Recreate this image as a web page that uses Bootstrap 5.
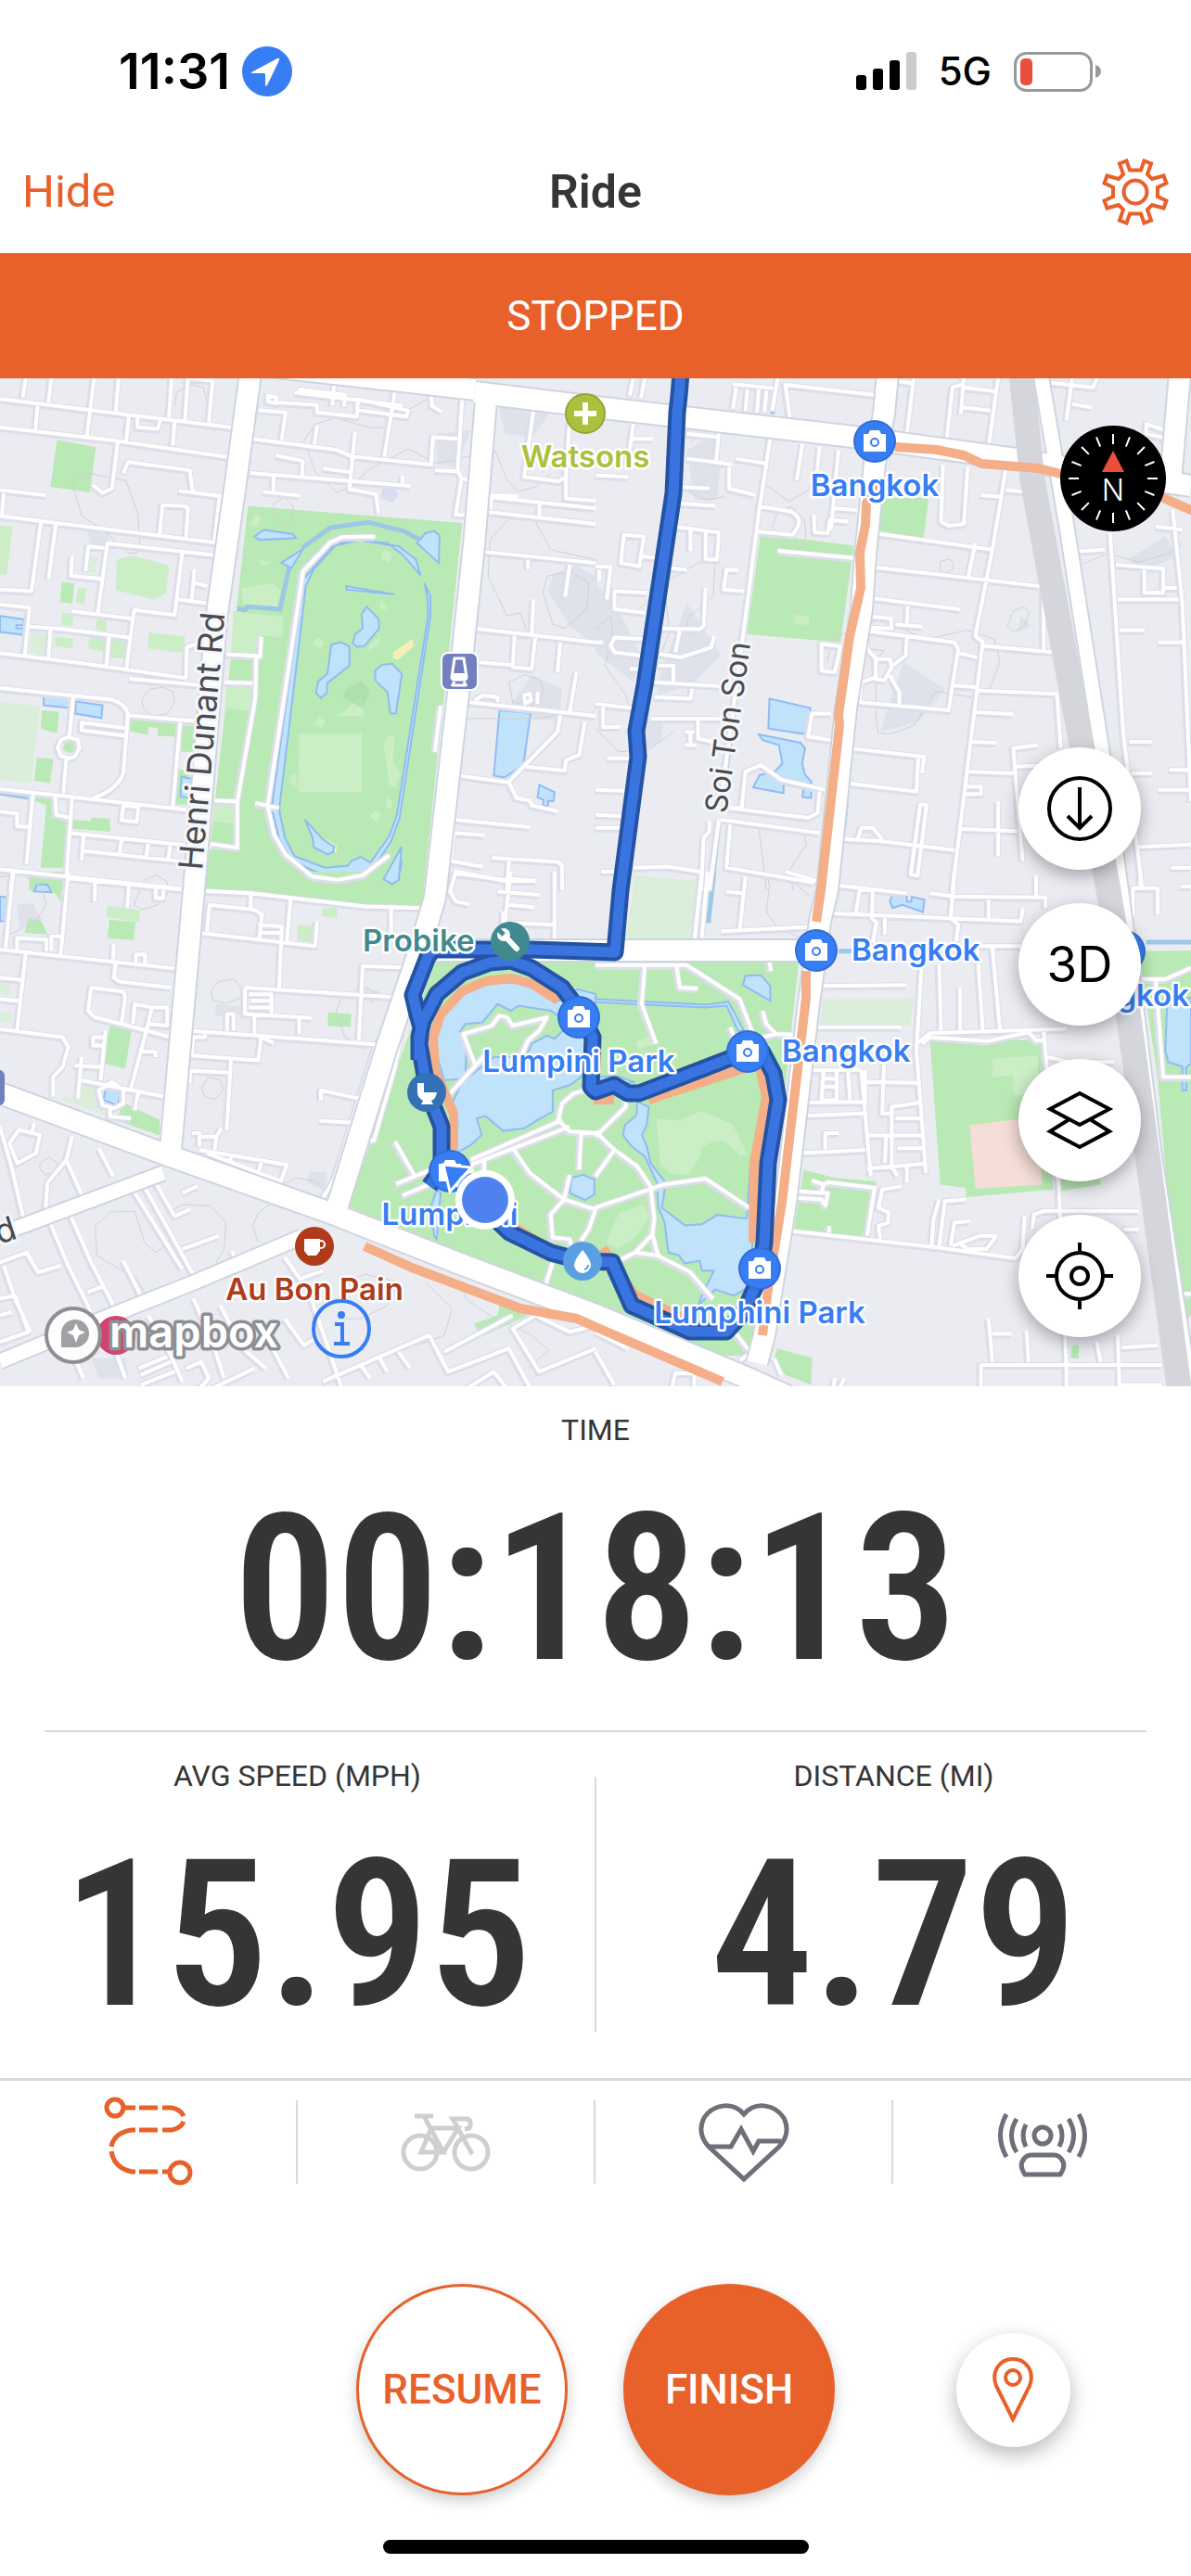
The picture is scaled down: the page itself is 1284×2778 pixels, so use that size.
<!DOCTYPE html>
<html lang="en">
<head>
<meta charset="utf-8">
<meta name="viewport" content="width=device-width, initial-scale=1">
<title>Ride</title>
<link rel="stylesheet" href="https://cdn.jsdelivr.net/npm/bootstrap@5.3.0/dist/css/bootstrap.min.css">
<style>
:root{--brand:#e8602a;--ink:#353535;--rule:#d9d9d9}
body{font-family:Roboto,"Liberation Sans",sans-serif;color:var(--ink);background:#fff;line-height:1}
svg{display:block}
.status-bar{height:140px;padding:14px 96px 0 128px;color:#000;font-family:Inter,"Liberation Sans",sans-serif}
.clock-group{gap:12px}
.clock{font-size:54px;font-weight:600}
.carrier{font-size:42px;font-weight:500}
.title-bar{height:133px;padding:0 24px}
.title-bar>*{flex:1 1 0}
.hide-btn{font-size:49px;font-weight:400;color:var(--brand)}
.screen-title{font-size:50px;font-weight:600}
.state-banner{height:135px;background:var(--brand);color:#fff;font-size:44px;font-weight:400}
.map-area{height:1087px;background:#ebecf2}
.map-canvas{width:100%;height:100%}
.map-canvas path{vector-effect:non-scaling-stroke}
.map-tools{top:398px;right:54px;gap:36px}
.tool-btn{width:132px;height:132px;background:#fff;color:#000;font:400 53px Inter,"Liberation Sans",sans-serif;box-shadow:0 6px 18px rgba(0,0,0,.32)}
.compass{top:51px;right:27px;width:114px;height:114px}
.park{fill:#b9e9b4}.lawn{fill:#cbeec6}.pale{fill:#daeeda}
.water{fill:#c1e2fb;stroke:#8fbcf3;stroke-width:2}
.canal{fill:none;stroke:#9cc8e6;stroke-width:5}
.hill{fill:#dcdfe8;opacity:.8}
.contour{fill:none;stroke:#cfd2d3;stroke-width:1}
.road-edge,.road-fill{fill:none;stroke-linejoin:round}
.road-edge{stroke:#dddee9;stroke-width:8}
.road-fill{stroke:#fff;stroke-width:4}
.main-edge{stroke:#cfd5e0;stroke-width:26;fill:none}
.main-fill{stroke:#fff;stroke-width:22;fill:none}
.sub-edge{stroke:#cfd5e0;stroke-width:19;fill:none}
.sub-fill{stroke:#fff;stroke-width:15;fill:none}
.rail{stroke:#d5d6dc;stroke-width:27;fill:none}
.heat{stroke:#f4ae88;stroke-width:10;fill:none;stroke-linejoin:round}
.track-edge{stroke:#2453a3;stroke-width:19;fill:none;stroke-linejoin:round}
.track-fill{stroke:#3974e0;stroke-width:11;fill:none;stroke-linejoin:round}
.poi{font:600 33px Inter,"Liberation Sans",sans-serif;fill:#377df4;stroke:#fff;stroke-width:5;stroke-linejoin:round;paint-order:stroke}
.street{font:400 36px Inter,"Liberation Sans",sans-serif;fill:#4a4a50;stroke:#f5f6f9;stroke-width:6;stroke-linejoin:round;paint-order:stroke}
.lane{font-size:33px}
.brandmark{font:600 47px Inter,"Liberation Sans",sans-serif;fill:#fff;stroke:#8e8f94;stroke-width:7;stroke-linejoin:round;paint-order:stroke}
.metric{height:372px;padding-top:31px}
.metric-name{font-size:32px;line-height:32px;font-weight:400}
.metric-value{font-family:"Roboto Condensed",Roboto,sans-serif;font-weight:600;font-size:220px;line-height:228px;margin-top:42px}
.time-metric{height:373px;margin:0 48px;border-bottom:2px solid var(--rule)}
.metric-rule{width:2px;height:275px;margin-top:48px;background:var(--rule)}
.pair{height:373px}
.tab-strip{border-top:3px solid var(--rule);height:134px;padding-top:21px}
.tab-btn{height:90px;border-right:2px solid var(--rule)!important}
.tab-btn:last-child{border-right:0!important}
.tab-btn svg{overflow:visible}
.ride-actions{display:grid;grid-template-columns:1fr auto 1fr;padding-top:88px}
.ride-actions>:nth-child(2){gap:60px}
.ride-btn{width:228px;height:228px;font-size:44px;font-weight:500;border:3px solid var(--brand);box-shadow:0 6px 16px rgba(0,0,0,.2)}
.resume-btn{background:#fff;color:var(--brand)}
.finish-btn{background:var(--brand);color:#fff}
.pin-btn{width:123px;height:123px;background:#fff;box-shadow:0 8px 22px rgba(0,0,0,.28)}
.home-bar{width:459px;height:15px;background:#000;margin:48px auto 22px}
</style>
</head>
<body>
<header>
  <div class="status-bar d-flex align-items-center justify-content-between">
    <div class="d-flex align-items-center clock-group">
      <span class="clock">11:31</span>
      <svg width="56" height="56" viewBox="0 0 56 56"><circle cx="28" cy="28" r="27" fill="#377df4"/><path d="M11 29 39 14q3-1 2 2L28 43q-2 2-2-1V31l-1-1H13q-3 0-2-1z" fill="#fff"/></svg>
    </div>
    <div class="d-flex align-items-center gap-4">
      <svg width="65" height="42" viewBox="0 0 65 42"><rect y="25" width="11" height="16" rx="3"/><rect x="18" y="18" width="11" height="23" rx="3"/><rect x="36" y="9" width="11" height="32" rx="3"/><rect x="54" width="11" height="41" rx="3" fill="#ccc"/></svg>
      <span class="carrier">5G</span>
      <svg width="95" height="43" viewBox="0 0 95 43"><rect x="1.500" y="1.500" width="82" height="40" rx="12" fill="none" stroke="#999" stroke-width="3"/><rect x="7" y="7" width="13" height="29" rx="5" fill="#ea4e3d"/><path d="M88 14q6 2 6 7t-6 7z" fill="#999"/></svg>
    </div>
  </div>
  <div class="title-bar d-flex align-items-center">
    <div><button type="button" class="btn p-0 border-0 lh-1 hide-btn">Hide</button></div>
    <h1 class="screen-title text-center m-0">Ride</h1>
    <div class="d-flex justify-content-end"><button type="button" class="btn p-0 border-0" aria-label="Settings">
      <svg width="72" height="72" viewBox="-36 -36 72 72" fill="none" stroke="#e8602a" stroke-width="4"><circle r="12.500"/><path d="M-6-23.500H6L9.500-33.500 17-30.500 13-19 18-14 30.500-17.500 33.500-9.500 24-5V5L33.500 9.500 30.500 17.500 18 14 13 19 17 30.500 9.500 33.500 6 23.500H-6L-9.500 33.500-17 30.500-13 19-18 14-30.500 17.500-33.500 9.500-24 5V-5L-33.500-9.500-30.500-17.500-18-14-13-19-17-30.500-9.500-33.500z"/></svg></button></div>
  </div>
</header>
<main>
<div class="state-banner d-flex align-items-center justify-content-center" role="status">STOPPED</div>
<section class="map-area position-relative overflow-hidden" aria-label="Map">
<svg class="map-canvas" viewBox="0 0 1284 1087" preserveAspectRatio="xMidYMid slice">
<defs>
  <g id="roads">
    <path transform="translate(0 -8) scale(.4095 .3571)" d="M0 85 620 172M0 170 300 210 610 262M68 22 60 80M135 22 128 95M248 22 238 115 228 200M312 22 305 125M452 22 445 140M495 22 487 150M100 95 93 180M340 130 332 215M362 140V170L415 175 422 150M460 150 455 225M560 30 550 155M495 22 560 30M310 215 295 355 270 368 245 345M325 310 337 275 500 300 507 362M470 362 595 380M578 380 565 515M0 360 120 375M10 370 5 435M0 438 580 520M420 500 428 405 485 408 495 415 490 505M108 455 83 665 0 660M147 462 128 630M578 558 283 520 258 730M275 535 233 530 225 605M190 560 187 618 268 628M480 550 460 737 353 722 333 900M512 600 505 695M512 640 545 650M470 690 550 702M188 725 347 748M0 705 78 715 65 860M78 772 170 780 340 805M133 782 128 865M287 800 280 895M0 852 230 885 490 928M340 930 540 950M490 928 492 835 520 822M0 958 295 993Q330 1005 337 1035L325 1215Q310 1265 245 1290M193 980 183 1105M180 1105 205 1115 209 1140 197 1165 180 1170 160 1162 152 1137 160 1115zM175 1170 167 1275M340 1040 520 1058M475 1055 455 1315M328 1078 215 1062V1085L330 1102M0 1262 490 1325M145 1285 148 1340 185 1350M190 1290 175 1530M87 1275 70 1490M185 1395 555 1440M325 1312 365 1317 360 1362 320 1357zM220 1405 215 1478M222 1450 470 1480M320 1415 315 1460M390 1428 385 1470M448 1435 443 1478M0 1505 480 1565M35 1510 28 1568M0 1330 45 1337V1375L75 1377
    M680 118 752 125 742 208M665 205 885 238 925 258 1135 283 1140 200 1205 205M658 308 1080 347M720 320V365M692 365 790 377M725 255 797 272 795 318M935 185 920 357 990 372 997 430M850 295 922 305M835 165 828 222M1217 85 1205 300 1215 325 1230 328M1215 325 1200 435H1225M1145 300 1205 303M1012 260 1040 60M705 75 728 80V98L705 92zM730 95 835 103V125L940 138 942 85 1075 120 1070 138 940 118M785 55 910 72 905 108M880 35 875 105M775 65 1060 105M1135 70 1137 105 1162 123M1060 345V318
    M1280 375 1365 377M1283 380 1568 415M1278 425 1568 462M1420 400V438M1293 385V418M1405 115 1380 320 1470 333 1490 320 1500 150M1490 300V385L1568 392M1265 545 1568 580M1390 570V600M1500 585 1488 682M1245 777 1568 820M1405 690 1400 795M1355 800 1350 895 1400 900 1410 800M1475 820 1468 910M1262 880 1345 888M1230 1000 1568 1042M1250 995 1270 980 1310 985V1000M1380 980 1395 975 1398 995 1383 1005zM1415 970V1005M1518 910 1500 1030M1475 1040 1468 1090 1340 1240M1207 1222 1340 1243 1360 1290 1395 1298 1400 1312 1468 1330M1385 1195 1487 1207 1490 1175 1525 1160 1540 1060M1197 1355 1395 1378M1275 1402 1195 1395 1187 1480 1270 1497M1295 1470 1470 1483 1480 1495V1568M1340 1480 1335 1568M1195 1510 1330 1540H1410M1160 1010 1145 1150
    M595 855 685 862 688 803M675 865 672 990 625 1300V1440L555 1428M590 940 665 943M565 1297 625 1300M988 500 900 502 870 518 798 605 705 1315 722 1400 752 1460 822 1527 890 1537 955 1523 1025 1462M672 1305 735 1320"/>
    <path transform="translate(642 -8) scale(.4095 .3571)" d="M100 22 90 75M130 22 120 82M360 40 468 52M370 50 362 115M400 55 395 122M430 55 425 125M450 60 445 125M480 22 465 120M755 75 500 42 512 140M838 22 820 190M790 30 835 38M965 40 940 50 925 205M970 22 962 130M970 50 1055 62M965 110 1040 120M1060 22 1035 230M1190 35 1310 50 1320 22M1255 22 1240 150M1255 100 1305 110M460 205 430 430 400 700 330 1300M240 265 360 282M325 185 318 270M352 290V355L420 375M370 265 450 280M545 220 530 330M590 230 580 350M640 240 620 480M240 190 325 200M225 350 300 355M220 400 315 407M210 470 325 488 320 570 290 568V480M250 480V545M190 595 240 600M375 602 345 600 338 660 390 665M290 655 285 770 275 780 175 778M222 785 210 850M168 855 225 865 305 835 312 800M430 408 515 425Q540 440 535 465L520 495 425 485M575 435 577 487 612 490 617 450 665 455M630 415 690 420M480 543 680 565M595 825 645 832 630 910 595 905zM720 685 960 720M822 710 820 762M790 765 860 772M710 740 778 748 780 778 712 775M715 785 945 820 955 840 930 1025 690 1000M820 800 817 860 775 895M715 800V840L740 870H775L780 895 760 935 738 930V870M775 920 800 970V1018M738 925 700 940 695 1000M735 490 1045 540M730 592 1170 650M1080 300 1045 540 1000 800 1020 820 960 1380 940 1568M1000 520 980 630M1020 830 1210 850M1000 965 1215 975M950 850 1005 865M945 950 1000 955M1180 650V845M1080 360 1130 365M1015 375 1070 380M915 285 910 455 930 468 970 462 980 290M1000 1030 1100 1037M990 1120 1055 1123M975 1210 1100 1215M1165 1130 1100 1140 1125 1480M1105 1195 1200 1190M670 1140 865 1165 860 1215M850 1165 845 1270 660 1245M640 1413 750 1420 945 1447M690 1415 700 1380H730L755 1415M855 1310H872L848 1525 830 1520zM975 1255H1015V1278H970M955 1383 1110 1390M1060 1300V1465M1215 975 1225 1140M1355 490 1390 1100 1440 1568M1270 545 1340 540M1370 585 1495 597V670H1445V600M1500 655H1530M1375 690H1535M1520 420 1545 700 1568 1300M1380 783H1445M1405 1120H1465M1510 1205H1568M1480 1265H1568M1410 1215H1465M1480 820H1545M1430 1437 1568 1430M1515 1500H1568M1540 195 1450 160V190L1530 210M1475 470 1545 480M1160 1525V1568
    M100 160 85 280M90 205H150M0 315 85 320M75 495 128 500 115 590 67 580zM120 560 165 565M0 590 40 592 30 690M10 600V635M135 670 50 665V720L130 730M130 810 50 805 40 830 50 850 120 860M0 820H20M90 900H120M0 1005 110 1020M20 1015V1075H65M150 940 330 952M155 985 250 990 255 960M165 890H205V940M145 1050H330M0 1265 75 1268M30 1170H90M0 1340 70 1345M0 1380H65M235 1090H260M235 1130H265M250 1090V1135M270 1050V1110L310 1120M330 1320H385L395 1210 435 1190 490 1235 605 1265M350 1320 560 1350 585 1335 590 1270M330 1355 590 1395M355 1370 345 1500 575 1545M300 1360V1390L285 1410 278 1568M325 1355 300 1568M100 1500 190 1497 275 1512M15 1512H50M620 1035H570L560 1105 625 1115"/>
    <path transform="translate(0 532) scale(.4095 .3571)" d="M35 0 15 230M0 235 465 293M68 245 45 480M0 320 60 327M0 385 48 390M0 475 165 500 180 530 165 590 140 620V680M300 220 298 265M305 270 300 320 315 332 450 350M358 275V250H382V278M180 0 160 250M180 20 490 55M250 25V90M340 40 335 110M410 50V80H430V50M45 235V200L122 205V240M135 240V195H160M240 350 325 362 330 380 320 460 250 440 232 420zM320 460 450 500M350 460 355 400 400 410 390 460 440 465V410H400M390 460 345 655M278 480 265 630M275 500H245V525H275M370 540 410 545V560M195 585 265 590M215 560 205 685M215 630 435 680M365 660 355 720M295 635 325 660V700L300 715 270 705 260 660zM290 715V740L345 745M535 58 660 65 960 105 1115 110M545 180 552 100 670 115 690 130 682 210M660 65V110M765 85 755 215M680 160 742 165 735 350M685 185H745M525 185 830 225 835 150M1030 110V200M645 350 1055 380M945 510 955 285 1070 290M645 350V430L820 442M655 370H715V430M660 390H715M655 410H715V370M598 480V430H615V480M670 435V490M788 445V490M498 480 1005 523M540 485V500H508L505 555 680 570 688 500 720 517M490 600 605 607M608 570 597 780M500 600V640M990 525 880 930 850 985M1075 380 1040 590 985 810 960 815 900 1010M945 685 845 660V690M930 758 840 752M505 790H525V830M525 800H570L583 775M570 800 565 840M525 840 755 885 740 935 545 850M610 860 600 880M690 870 680 910M0 770 30 890 65 1060M90 760 85 785M25 820 50 780 105 795 95 850 45 880zM190 800 175 870 215 975M175 870 125 940 120 1020M260 835 298 920M130 1055 180 1190 240 1330M185 1035 240 1180 290 1290 310 1340M350 960 480 1200M380 950 520 1240M410 940 460 1040 500 1020M480 1140 575 1100M480 970 520 950M0 1180 70 1150 100 1210 160 1190M10 1190 40 1290 80 1390M230 1270 275 1250M0 1290 40 1280 75 1390 0 1420M0 1340 30 1330M325 1175 375 1290M610 1145 630 1190M750 1165 790 1230 850 1205M580 1310 640 1440 700 1500M510 1290 560 1420 590 1530M390 1340 450 1460 480 1540M190 1450 220 1530M290 1400 330 1530M365 1500 440 1465M370 1520 450 1480M370 1550 460 1510M490 1500 530 1480 550 1530 520 1568M560 1560 670 1500M700 1400 760 1530M750 1350 800 1430 830 1410M820 1290 900 1560M850 1540 1130 1400 1180 1510 1340 1440M950 1490 975 1530M1000 1470 1020 1510M1050 1450 1080 1500M1170 1450 1350 1340M1568 1370 1500 1390 1410 1340 1350 1380 1420 1510 1568 1440M1220 1568 1300 1510 1340 1568M1340 1440 1400 1568
    M1240 870 1480 750M1240 885 1500 770M1275 870V910M1350 835 1395 910 1485 990 1568 1020 1550 1080 1530 1115M1530 790 1525 900M1500 915 1485 990 1450 1035 1455 1105 1500 1110 1505 1130M1540 660 1510 670 1480 700 1470 750 1500 785 1568 790M1455 1180 1435 1255M1043 943 1200 870M1060 978 1130 945M1040 815 1090 915M1185 670 1280 550M1250 580 1220 490 1295 465 1315 435 1335 440 1350 465 1440 440 1420 480 1390 510 1375 550M1460 0V205M1325 120V180M1330 20 1410 27M1310 60 1420 70M1340 100 1405 107M1345 155 1460 160M1200 0 1185 60 1200 90 1235 98M1200 5 1345 28M1345 0 1330 150"/>
    <path transform="translate(642 532) scale(.4095 .3571)" d="M330 180 590 165M345 60 385 65M395 15 380 175M280 0 260 215M295 0 280 200M500 0 590 30M625 40 820 65M605 125 1120 150 1125 110M695 60 685 130M690 55H730L728 140 740 155 730 215M762 135V190M880 65 945 75 1185 78V110M945 0 935 140 955 160 950 210M1035 85V150M1160 15V75M1010 225H1120M905 280 910 480M960 350V480M1005 230 1020 480M1045 230 1065 480M860 260 845 540 870 910M595 345 820 342M585 470H805M845 520 880 488 1240 475M860 520 880 500 1030 512 1140 485 1160 510H1180M1180 480 1200 750 1220 950 1240 1500M570 600 700 598M710 600V700M600 605 595 690H635V605M600 625H635M600 650H635M665 600 670 690M555 697 710 695M550 737 705 730M700 600 725 920M760 570 755 730H775M712 635 850 638M855 697 780 710V890L795 920M720 797H860M790 745H855M795 835H865M545 850 710 840M605 838V790H640M715 897 865 882M765 800 762 880M820 885V940M570 932 600 945 615 938 735 955 715 1100M615 1070V1090M600 945 595 970 530 965V985L595 990 605 1008 612 970H595M515 1085 900 1135 1105 1168 1125 1140 1130 1040M750 1110 745 1070 770 1060 772 1030 745 1015 755 960 805 950M885 1130 890 1050 905 990M905 1130 920 995 975 990M935 1130 945 1060 985 1055M940 1130 1010 1100H1055L1030 1140H980L955 1120M1150 1080 1155 1035 1180 1025H1430M1015 1568V1490H1490M1045 1480 1035 1350M1045 1395H1095M1135 1385 1140 1480M1320 1420 1330 1480M1380 1568 1375 1400M1385 1437 1480 1430M1240 1490V1568M1390 1080H1430M1385 1550H1490M1415 140V50H1480V130M1435 0V45M1435 325H1500L1550 300 1568 290M1475 330 1495 620H1568M1190 560 1250 575H1365M1540 45H1568M1550 1275H1568
    M130 280 122 400 160 520M213 280 222 350 270 353M0 282H240L380 385 415 490M355 470 365 500M440 420 450 460 475 490 525 492M475 490 440 500M80 690V710L0 800M0 785 50 840 110 890 145 950 155 1050 150 1095 165 1160 250 1210 310 1290M50 840 0 920M0 1015 180 945 290 927 405 1015M150 1095 105 1150 60 1175M105 1150 170 1160M370 1395 410 1455 380 1475M458 270 462 300M0 1390 85 1440M0 1450 50 1550M200 1568 210 1515H260V1568M470 1470 490 1520M630 1530 625 1568M655 1530 640 1568"/>
  </g>
  <path id="mains" d="M270-5 253 120 233 260 209 552 184 832M524 24 511 180 495 331 469 560 452 617 418 718 364 892M957-5 953 38 943 92 933 190 929 249 912 356 892 552 884 586 871 682 847 889 824 1032 816 1062M460 617 870 617M512 15 642 31 920 63 1097 87 1160 98 1284 116M280-14 512 12M0 771 184 839 356 900 491 953 642 1010 806 1078 850 1098M1272-5 1262 110"/>
  <path id="subs" d="M0 1060 111 1014 209 975 325 926M0 923 176 857M1122-5 1150 160 1187 395 1215 600 1244 836 1283 1092"/>
  <path id="ride-line" d="M734-5 732 19 730 37 726 124 695 331 686 380 688 408 669 552 663 619 573 616H467L461 624 445 665 450 686 454 700 452 718 461 769 476 807V853L463 871M452 735V710L456 693 471 664 498 641 528 630 551 628 573 636 606 657 625 682 639 711 637 764 642 769 662 762 677 771H689L785 734 806 725 822 727 834 750 839 778 828 846 824 932 818 971 802 1007 783 1028H744L681 1000 660 953 628 952 594 943 549 921 522 895"/>
  <g id="camera"><circle r="23" fill="#2f6cd8"/><circle r="21" fill="#377df4"/><path d="M-12-8h5l2-4H5l2 4h5V11h-24z" fill="#fff"/><circle cy="1" r="4" fill="#fff" stroke="#377df4" stroke-width="2"/></g>
</defs>
<g transform="translate(0 -8) scale(.4095 .3571)">
  <path class="hill" d="M230 485 285 490 290 540 240 530zM1520 590 1568 620V830L1500 770 1440 660 1460 610zM1400 920 1480 960 1470 1060 1330 1030zM1150 190 1240 180 1200 290 1150 280zM1310 100 1460 110 1400 200 1330 190z"/>
  <path class="park" d="M653 408 1217 459 1115 1568H540zM150 208 252 230 237 367 133 350zM163 637 195 642 190 703 158 698zM110 1025 155 1030 150 1095 107 1080zM345 1045 465 1060 460 1105 415 1102V1078L390 1075V1100L342 1088zM480 1072H512V1150H477zM97 1168 140 1172 132 1245 90 1238zM470 1205H500V1310H462zM92 1280 135 1290V1320L180 1345 170 1500H107L122 1310 92 1300zM190 1355 240 1360V1350L290 1352V1392L190 1382zM80 1520 165 1530V1568H75zM170 1125 190 1118 200 1140 185 1155 165 1145z"/>
  <path class="lawn" d="M308 570 345 558 440 585 445 600 436 672 405 690 305 662zM0 468 33 470 18 615 0 615zM392 790 487 802 482 852 388 838zM205 655 227 658 222 703 200 700zM165 730 192 732V770L160 765zM255 745H280V787L252 780zM145 802 192 808V838L145 832zM235 800 280 808 275 848 232 838zM292 808 335 812 330 870 288 865zM635 655 720 642 740 665 730 712 640 703zM615 725 747 742 742 805 690 798 685 860 608 845zM595 950 665 958 655 1028 592 1018zM787 1095H953V1272H785zM1010 1130 1025 1100 1038 1105 1035 1180 1055 1215 1040 1258 1025 1250zM670 435 687 442 677 473 660 462zM680 570 718 578 690 590zM1010 540 1035 552 1025 577 1003 568zM838 805 857 822 842 838 822 825zM1000 803 997 825 967 852 970 830zM1005 690 1022 728 997 712zM840 1043 857 1058 847 1077 827 1068zM950 983 960 1043 890 1043zM765 1220 780 1215 783 1258 762 1240zM1020 1288 1035 1300 1028 1325 1015 1315zM990 1325 1005 1340 990 1362 973 1345zM563 1300 617 1310 612 1368 560 1360z"/>
  <path class="pale" d="M0 1000 105 1012 82 1245 0 1235zM82 790 125 795 118 858 78 850zM235 560 257 565 250 612 230 608z"/>
  <path d="M950 935 975 965 955 1020 905 985 908 965z" fill="#a9dba9" opacity=".7"/>
  <path d="M1035 850 1085 810 1090 830 1048 873 1035 868zM822 1355 855 1410 887 1435 885 1460z" fill="#f2efb9"/>
  <path d="M1005 358 1030 345 1050 370 1035 398 1003 385z" fill="#dcdcf2"/>
  <path class="canal" d="M625 718 645 722 652 712 737 720 762 590M795 535 870 473 970 457 1065 485 1105 510M0 1275 75 1288"/>
  <path class="water" d="M670 500 695 480 770 493 780 505 682 510zM798 537 768 595 740 580zM1098 520 1120 490 1143 483 1157 497 1155 580zM912 650 1038 675 912 660zM965 712 997 750 998 778 960 830 940 833 929 822 935 795 955 778 952 735zM872 827 897 819 920 833V890L862 942 860 972 845 988 832 972 838 937 862 915zM988 935V905L1005 888 1032 884 1058 915 1042 1035H1028L1020 970zM803 1355 850 1415 880 1437 877 1453 862 1460 826 1438 823 1410zM115 978 188 988 185 1018 115 1010zM200 998 270 1010 267 1048 198 1035zM0 740 63 750V768H43V777H62L60 797 0 788zM1315 1025 1397 1033 1378 1190 1328 1228 1300 1222zM1420 1250 1460 1272 1457 1300 1443 1298V1315L1430 1312V1295L1415 1288zM478 1225 505 1232V1290L475 1285zM1057 1485 1050 1545 1032 1555 1010 1532zM98 1550 125 1548 135 1568H90z"/>
  <path class="water" fill-rule="evenodd" d="M955 508 882 528 825 600 805 650 790 800 735 1325 750 1410 775 1465 855 1500 915 1495 925 1480 950 1468 975 1485 1025 1405 1045 1340 1127 740 1125 680 1117 640 1133 680V740L1052 1350 1030 1420 990 1490 960 1515 850 1522 768 1480 735 1415 715 1320 798 630 825 595 880 522zM955 513 1020 520 1060 555 1107 617 1095 570 1050 530z"/>
  <path class="contour" d="M190 340 200 315 230 308 332 332 363 430 368 522M190 340 215 438 270 478 338 550H360L368 520M460 105 465 65 500 40 535 50 548 105M800 210 830 160 885 142 975 172 1015 170 1030 145 1135 80M800 210 830 305 887 367 915 355 970 300 1075 235 1150 280 1235 258M720 400 750 382 772 410 768 450 745 465 722 440zM373 995 392 962 428 955 455 968 459 1002 440 1035 402 1042 378 1020zM1303 240 1335 330 1365 365 1410 350 1450 310M1290 510 1345 440 1410 455 1450 540 1568 570M1290 510 1285 620 1335 740 1370 730 1385 780M1440 620 1500 605 1550 640 1545 720 1485 778 1455 765 1430 670zM1340 940 1380 918 1420 930 1432 970 1405 1010 1350 1000zM1230 1050H1420L1490 1035"/>
</g>
<g transform="translate(642 -8) scale(.4095 .3571)">
  <path class="hill" d="M0 640 60 720 120 860 100 940 0 850zM240 700 170 920 160 980 250 950 330 860zM130 1050 180 1060 170 1120 80 1180zM810 880 920 960 850 1060 750 1090 780 980zM1400 570 1500 500 1530 560 1450 600zM240 240 300 200 330 270 320 390 260 390zM1120 740 1150 770 1110 790z"/>
  <path class="park" d="M435 492 680 528 645 820 398 795zM755 382H877L864 506 748 490z"/>
  <path class="lawn" d="M525 735 563 742 560 768 520 762z"/>
  <path class="pale" d="M100 1525 268 1540V1568H98z"/>
  <path class="canal" d="M475 22 466 130M455 205 345 1200M325 1370 305 1568M660 1310 652 1390"/>
  <path class="water" d="M458 990 566 1018 556 1098 455 1080zM430 1098 540 1123 552 1140 544 1185 552 1220 568 1240V1290L545 1287 548 1255 495 1250V1275L415 1258 432 1220 470 1213 492 1185 483 1130 440 1115z"/>
  <path class="contour" d="M450 345 510 395 560 360 590 280M465 470 480 425 515 410 550 450 555 500 535 535 490 510zM245 365 290 390 340 380M250 215 280 195 320 220M0 780 40 740 45 800 25 890 80 980 100 1060M320 570 270 580 195 630 115 720M315 570 310 680 240 750 245 800M185 690 195 790 170 860M908 575 930 568 943 580 940 600 920 612 907 600zM1085 770 1100 725 1128 712 1142 730 1128 770 1100 788zM720 765 750 750 870 810 980 783 1050 810 1065 880 1030 980M738 940V1040L745 1095H780L840 1070 895 968 990 985M610 880 625 810 660 790M720 840 760 845 730 880M430 1380 450 1568M550 1400 555 1430 510 1510 520 1568M1280 585 1350 550 1430 578 1510 550 1545 520M0 1080 60 1150 140 1145 205 1090"/>
</g>
<g transform="translate(0 532) scale(.4095 .3571)">
  <path class="hill" d="M45 100 85 95 110 145 50 170zM570 400 650 410 640 430 565 435zM930 350 1000 360 980 400zM240 1470 330 1470 340 1530 260 1530zM815 905 860 910 855 960 810 940z"/>
  <path class="park" d="M540 0H1117L1113 107 960 105 660 65 535 55zM80 0H165L160 90 145 65 75 55zM288 145 357 152 352 207 283 200zM75 140 110 150 125 190 65 185zM290 455 348 465 330 595 275 580zM865 425 925 430 922 470 862 465zM320 695 420 750V797L310 752zM10 820 40 880 30 890zM1315 1310 1390 1340 1265 1405 1248 1365 1310 1340z"/>
  <path class="water" d="M1057-75 1050 25 1032 38 1010 22z"/>
  <path class="lawn" d="M285 103 370 117 365 152 278 138zM783 160 825 165V212L782 208zM850 110H888V140L848 135z"/>
  <path class="pale" d="M0 335 27 340 22 375 0 370zM215 640 262 645 270 700 290 740 165 690V680L212 690zM0 425 30 428V455L0 452z"/>
  <path class="water" d="M280 648 318 660 310 706 272 690zM0 75 18 78 12 150 0 150zM98 38 125 40 135 62 90 60z"/>
  <path class="contour" d="M555 360 575 332 615 325 642 355 635 380 595 398 560 388zM530 655 548 622 580 628 588 660 565 688 540 680zM885 420 900 380 965 350 1040 400M885 420 908 500 960 535 1000 500M352 100 380 25 410 10 440 30 440 70 415 100 375 115zM0 15 60 10 110 45 122 100 95 150 25 190M105 880 130 862 150 880 145 908 120 915 105 900zM250 1070 290 1028 355 1025 380 1120 410 1150 445 1120 440 1080M250 1070 255 1160 360 1230 390 1290M440 1030 480 1005 555 1010 595 1060 590 1140 560 1200M735 950 780 925 830 935 855 965M730 990 680 1030 665 1070 680 1120M1120 1240 1190 1320 1170 1400 1100 1430M880 1300 920 1240 960 1215 1050 1240 1020 1310 950 1350 890 1350M1215 1240 1225 1290 1290 1340 1400 1400 1445 1445 1390 1500"/>
</g>
<g transform="translate(642 532) scale(.4095 .3571)">
  <path class="park" d="M548 900 630 925 740 935 720 1105 522 1085zM880 500 1175 510 1205 960 975 983V955L908 945zM1220 930H1330V945L1225 965zM1430 240 1568 238V1340L1535 1380 1480 620zM478 1440 570 1468 568 1550 500 1520 470 1475zM1255 1430H1272V1470H1250z"/>
  <path class="pale" d="M600 385 838 383 828 465 592 465zM105 12 270 30 255 205 80 200z"/>
  <path class="lawn" d="M1045 565 1165 555V675H1100V615L1045 620z"/>
  <path d="M985 765 1110 748 1175 750V945L1000 958z" fill="#f5ddd8"/>
  <path class="canal" d="M312 0 297 155M1450 213H1568M640 240H680"/>
  <path class="water" d="M780 72 820 76V90H832V76L866 85 862 122 808 100 782 110 775 90zM1505 400 1568 380V580L1555 590V660H1545V588L1508 575 1500 540z"/>
  <path class="contour" d="M450 0 458 40 450 120 480 170 540 200M500 10 565 75"/>
</g>
<path class="park" d="M469 630H861L847 760 814 1032 806 1053 770 1055 642 1003 500 946 375 893 446 693z"/>
<g transform="translate(0 532) scale(.4095 .3571)">
  <path class="water" d="M1170 630 1140 520 1155 450 1215 370 1290 335H1345L1400 330 1470 390 1500 370 1520 355 1568 370V560L1530 620 1500 645 1455 660V725L1415 750 1380 775 1325 783 1278 738 1255 745 1268 795 1240 825 1200 850 1205 750 1190 700 1215 640 1240 615 1300 560H1385L1400 520 1440 495 1460 505 1500 460 1450 420 1365 405 1345 420 1310 400 1270 455 1225 460 1210 485 1228 530 1225 625zM1505 925 1535 915 1565 930V975L1540 992 1500 970zM1135 1010 1150 960 1160 970 1150 1110 1143 1100z"/>
</g>
<g transform="translate(642 532) scale(.4095 .3571)">
  <path class="water" d="M110 695 140 710 135 765 122 795 135 830 145 880 185 940 175 1015 235 1068 280 1065 320 1037 398 1048 408 890 415 1240 395 1260 365 1280 315 1262 270 1310 280 1280 312 1205H280L275 1175 235 1183 218 1157 192 1150 182 1060 165 1010 162 940 130 860 95 830 72 795 78 765 108 735zM0 385 290 402 350 393 390 480 375 480 345 405 290 410 0 394zM395 315 435 312 460 345V390L388 342zM0 620 60 618 100 635 40 650z"/>
  <path class="lawn" d="M160 745 220 752 280 722 360 762 400 855 382 858 340 815H310L275 835 280 855 243 915 200 912 170 885zM62 1030 127 1005 143 1045 105 1105 57 1138 28 1120zM105 515 145 495 152 520 112 538z"/>
</g>
<use href="#roads" class="road-edge" x="-1" y="1"/>
<use href="#roads" class="road-fill"/>
<use href="#mains" class="main-edge"/>
<use href="#subs" class="sub-edge"/>
<use href="#subs" class="sub-fill"/>
<use href="#mains" class="main-fill"/>
<path class="rail" d="M1101-5 1113 110 1166 395 1195 552 1215 675 1272 1095"/>
<path class="heat" d="M965 74 1010 77 1039 83 1058 92 1119 97 1144 103 1252 128 1286 143M943 113 934 135 933 158 927 188 928 226 916 278 904 363 905 374 885 552 880 586M869 639V668L843 889 828 982 822 1032M489 832V793L469 746 467 711 475 686 498 661 524 650 551 647 573 653 602 671M640 778H662M699 778 818 739 826 775 813 846 812 932M393 936 444 959 561 1003 622 1014 642 1023 779 1082M650 938 684 988 740 1015M538 905 590 937"/>
<use href="#ride-line" class="track-edge"/>
<use href="#ride-line" class="track-fill"/>
<text class="street" transform="translate(218 531) rotate(-85)">Henri Dunant Rd</text>
<text class="street lane" transform="translate(783 470) rotate(-82)">Soi Ton Son</text>
<text class="street" transform="translate(-1 934) rotate(-18)">d</text>
<use href="#camera" x="943" y="68"/><use href="#camera" x="624" y="689"/><use href="#camera" x="880" y="617"/><use href="#camera" x="806" y="726"/><use href="#camera" x="1212" y="618"/><use href="#camera" x="485" y="855"/><use href="#camera" x="819" y="960"/>
<circle cx="631" cy="38" r="21" fill="#adc03d" stroke="#94a535" stroke-width="2"/><path d="M619 38h24M631 26v24" stroke="#fff" stroke-width="6"/>
<circle cx="550" cy="607" r="21" fill="#40898e"/><path d="M543 600 557 615" stroke="#fff" stroke-width="6" stroke-linecap="round"/><circle cx="543" cy="600" r="5" fill="none" stroke="#fff" stroke-width="4"/><path d="M543 600 536 593" stroke="#40898e" stroke-width="5"/>
<circle cx="460" cy="770" r="21" fill="#3271b5"/><path d="M450 760h7v10h14q-1 7-6 9l2 4h-13l2-4q-6-3-6-9z" fill="#fff"/>
<circle cx="628" cy="952" r="21" fill="#5b9fe3"/><path d="M628 940q9 11 9 16a9 9 0 0 1-18 0q0-5 9-16z" fill="#fff"/><path d="M634 956q0 4-4 5" fill="none" stroke="#5b9fe3" stroke-width="2"/>
<circle cx="339" cy="936" r="21" fill="#b03a1a"/><path d="M328 928h17v13l-4 5h-9l-4-5z" fill="#fff"/><circle cx="346" cy="934" r="4" fill="none" stroke="#fff" stroke-width="2"/>
<rect x="-20" y="746" width="25" height="38" rx="6" fill="#7380c0"/>
<rect x="476" y="296" width="39" height="40" rx="7" fill="#7380c0" stroke="#fff" stroke-width="2"/><path d="M490 302h10l3 20q0 3-3 3h-10q-3 0-3-3zM488 331h14M490 327l-3 5M500 327l3 5" fill="none" stroke="#fff" stroke-width="3"/><path d="M488 318h14v6h-14z" fill="#fff"/>
<g text-anchor="middle">
  <text class="poi" x="631" y="96" style="fill:#adc03d">Watsons</text>
  <text class="poi" x="943" y="127">Bangkok</text>
  <text class="poi" x="624" y="748">Lumpini Park</text>
  <text class="poi" x="485" y="913">Lumphini</text>
  <text class="poi" x="819" y="1019">Lumphini Park</text>
  <text class="poi" x="339" y="994" style="fill:#b03a1a">Au Bon Pain</text>
</g>
<text class="poi" x="391" y="618" style="fill:#40898e">Probike</text>
<text class="poi" x="918" y="628">Bangkok</text>
<text class="poi" x="843" y="737">Bangkok</text>
<text class="poi" x="1282" y="677" text-anchor="end">Bangkok</text>
<path d="M478 848 508 851 485 877z" fill="#377df4" stroke="#fff" stroke-width="3"/><path d="M492 872Q497 858 511 854" fill="none" stroke="#fff" stroke-width="3"/>
<circle cx="523" cy="886" r="32" fill="#fff"/><circle cx="523" cy="886" r="25" fill="#4f82ee"/>
<circle cx="125" cy="1032" r="21" fill="#d1446d"/>
<circle cx="79" cy="1032" r="29" fill="#fff" fill-opacity=".9" stroke="#8e8f94" stroke-width="4"/><path d="M66 1045V1030A15 15 0 1 1 82 1045z" fill="#a1a1a5"/><path d="M82 1019 85 1026 92 1029 85 1032 82 1040 79 1032 72 1029 79 1026z" fill="#fff"/>
<text class="brandmark" x="118" y="1045">mapbox</text>
<circle cx="368" cy="1025" r="30" fill="none" stroke="#377df4" stroke-width="4"/><path d="M361 1020h8v21M360 1041h17" fill="none" stroke="#377df4" stroke-width="4"/><circle cx="368" cy="1010" r="4" fill="#377df4"/>
</svg>
<svg class="compass position-absolute" viewBox="-57 -57 114 114" role="img" aria-label="North"><circle r="57"/><g stroke="#fff" stroke-width="2"><path id="ticks" d="M0-48V-37M0 48V37M-48 0H-37M48 0H37"/><use href="#ticks" transform="rotate(22)"/><use href="#ticks" transform="rotate(45)"/><use href="#ticks" transform="rotate(68)"/></g><path d="M0-30 12-7H-12z" fill="#ea4e3d"/><text y="24" text-anchor="middle" fill="#fff" font-family="Inter, sans-serif" font-size="32" font-weight="300">N</text></svg>
<div class="map-tools position-absolute d-flex flex-column">
  <button type="button" class="btn rounded-circle border-0 p-0 d-flex align-items-center justify-content-center tool-btn" aria-label="Download map"><svg width="74" height="74" viewBox="-37 -37 74 74" fill="none" stroke="#000" stroke-width="4"><circle r="33"/><path d="M0-23V21M-13 8 0 21 13 8"/></svg></button>
  <button type="button" class="btn rounded-circle border-0 p-0 tool-btn">3D</button>
  <button type="button" class="btn rounded-circle border-0 p-0 d-flex align-items-center justify-content-center tool-btn" aria-label="Map layers"><svg width="74" height="74" viewBox="-37 -37 74 74" fill="none" stroke="#000" stroke-width="4"><path d="M0-29 32-12 0 5-32-12zM-11-1-32 12 0 29 32 12 11-1"/></svg></button>
  <button type="button" class="btn rounded-circle border-0 p-0 d-flex align-items-center justify-content-center tool-btn" aria-label="Centre on me"><svg width="74" height="74" viewBox="-37 -37 74 74" fill="none" stroke="#000" stroke-width="4"><circle r="25"/><circle r="9"/><path d="M0-36V-25M0 36V25M-36 0H-25M36 0H25"/></svg></button>
</div>
</section>
<section aria-label="Ride stats">
  <div class="metric time-metric text-center"><div class="metric-name">TIME</div><div class="metric-value">00:18:13</div></div>
  <div class="d-flex pair">
    <div class="metric flex-fill w-50 text-center"><div class="metric-name">AVG SPEED (MPH)</div><div class="metric-value">15.95</div></div>
    <div class="metric-rule flex-shrink-0"></div>
    <div class="metric flex-fill w-50 text-center"><div class="metric-name">DISTANCE (MI)</div><div class="metric-value">4.79</div></div>
  </div>
</section>
</main>
<nav class="tab-strip d-flex" aria-label="Ride screens">
  <button type="button" class="btn rounded-0 border-0 flex-fill w-25 p-0 d-flex justify-content-center tab-btn" aria-label="Route"><svg width="96" height="96" viewBox="0 0 96 96" fill="none" stroke="#e8602a" stroke-width="5"><circle cx="12" cy="8" r="9"/><path d="M21 8H34M38 8H58M63 8H73Q83 10 86 17M86 23Q83 30 73 32H63M58 32H38M34 32H30Q11 35 8 50M8 55Q11 73 30 77H34M38 77H58M63 77H70"/><circle cx="82" cy="78" r="11"/></svg></button>
  <button type="button" class="btn rounded-0 border-0 flex-fill w-25 p-0 d-flex justify-content-center tab-btn" aria-label="Bike"><svg width="96" height="90" viewBox="0 0 96 90" fill="none" stroke="#cfcfd1" stroke-width="5"><circle cx="20" cy="56" r="18"/><circle cx="75" cy="56" r="18"/><path d="M14 17H34M24 17 45 56H21L32 30H61L45 56M76 58 55 20H71Q76 22 73 30L68 31"/></svg></button>
  <button type="button" class="btn rounded-0 border-0 flex-fill w-25 p-0 d-flex justify-content-center tab-btn" aria-label="Heart rate"><svg width="96" height="96" viewBox="0 0 96 96" fill="none" stroke="#6f6e79" stroke-width="5"><path d="M48 15C35 0 14 5 5 19-1 31 2 41 10 50L48 85 86 50C94 41 97 31 91 19 82 5 61 0 48 15z"/><path d="M11 50H34L45 31 58 55 64 44H88"/></svg></button>
  <button type="button" class="btn rounded-0 border-0 flex-fill w-25 p-0 d-flex justify-content-center tab-btn" aria-label="Sensors"><svg width="96" height="90" viewBox="0 0 96 90" fill="none" stroke="#6f6e79" stroke-width="5"><circle cx="48" cy="38" r="9"/><path d="M30 26Q24 38 30 50M20 20Q9 38 20 56M9 15Q-4 38 9 61M66 26Q72 38 66 50M76 20Q87 38 76 56M87 15Q100 38 87 61"/><path d="M29 80Q22 70 28 63 31 59 36 59H60Q65 59 68 63 74 70 67 80z"/></svg></button>
</nav>
<footer>
  <div class="ride-actions align-items-center">
    <div></div>
    <div class="d-flex">
      <button type="button" class="btn rounded-circle p-0 ride-btn resume-btn">RESUME</button>
      <button type="button" class="btn rounded-circle p-0 ride-btn finish-btn">FINISH</button>
    </div>
    <div class="d-flex justify-content-center"><button type="button" class="btn rounded-circle border-0 p-0 d-flex align-items-center justify-content-center pin-btn" aria-label="Drop a pin"><svg width="48" height="72" viewBox="0 0 48 72" fill="none" stroke="#e8602a" stroke-width="4"><path d="M24 68 6 32C0 16 10 3 24 3S48 16 42 32z"/><circle cx="24" cy="23" r="8"/></svg></button></div>
  </div>
  <div class="home-bar rounded-pill"></div>
</footer>
<script src="https://cdn.jsdelivr.net/npm/bootstrap@5.3.0/dist/js/bootstrap.bundle.min.js"></script>
</body>
</html>
